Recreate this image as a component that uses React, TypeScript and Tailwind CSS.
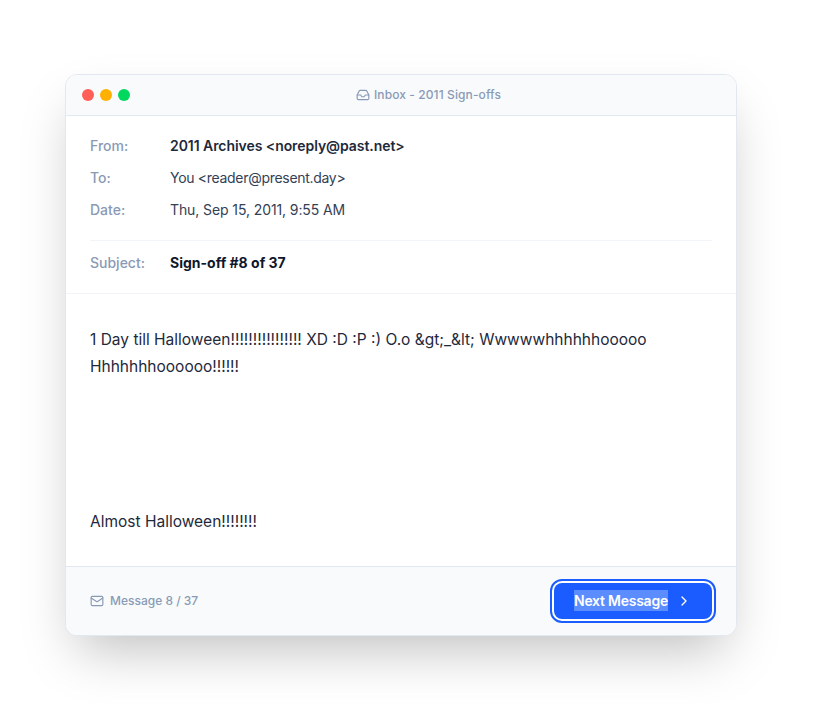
import { Inbox, Mail, ChevronRight } from 'lucide-react';

export default function App() {
  return (
    <div className="min-h-screen bg-white flex justify-start pl-[65px] pt-[74px] font-['Inter',sans-serif]">
      <div className="w-[672px] h-[562px] bg-white rounded-xl border border-[#e2e8f0] overflow-hidden flex flex-col shadow-[0_25px_50px_-12px_rgba(0,0,0,0.25)]">
        <div className="h-[41px] shrink-0 bg-[#f8fafc] border-b border-[#e2e8f0] flex items-center pl-4 pr-4">
          <div className="flex gap-1.5">
            <div className="w-3 h-3 rounded-full bg-[#ff5f57]"></div>
            <div className="w-3 h-3 rounded-full bg-[#ffb000]"></div>
            <div className="w-3 h-3 rounded-full bg-[#00d75f]"></div>
          </div>
          <div className="flex-1 flex items-center justify-center gap-1 pl-[7px] text-xs font-medium tracking-[0.1px] text-[#8a9ab5]">
            <Inbox size={14} />
            Inbox - 2011 Sign-offs
          </div>
        </div>

        <div className="px-6 pt-5 text-sm">
          <div className="flex h-5 items-center mb-3">
            <span className="w-20 font-medium text-[#8a9ab5]">From:</span>
            <span className="font-semibold tracking-[-0.06px] text-[#1e293b]">2011 Archives &lt;noreply@past.net&gt;</span>
          </div>
          <div className="flex h-5 items-center mb-3">
            <span className="w-20 font-medium text-[#8a9ab5]">To:</span>
            <span className="tracking-[-0.3px] text-[#334155]">You &lt;reader@present.day&gt;</span>
          </div>
          <div className="flex h-5 items-center">
            <span className="w-20 font-medium text-[#8a9ab5]">Date:</span>
            <span className="tracking-[-0.1px] text-[#334155]">Thu, Sep 15, 2011, 9:55 AM</span>
          </div>
          <div className="flex h-[53px] items-start pt-3 mt-5 border-t border-[#f1f5f9]">
            <span className="w-20 leading-5 font-medium text-[#8a9ab5]">Subject:</span>
            <span className="leading-5 font-bold text-[#0f172a]">Sign-off #8 of 37</span>
          </div>
        </div>

        <div className="flex-1 border-t border-[#f1f5f9] px-6 pt-8 text-[15.5px] leading-[27px] text-[#1e293b]">
          <p>1 Day till Halloween!!!!!!!!!!!!!!!! XD :D :P :) O.o &amp;gt;_&amp;lt; Wwwwwhhhhhhooooo Hhhhhhhoooooo!!!!!!</p>
          <p className="mt-[128px]">Almost Halloween!!!!!!!!</p>
        </div>

        <div className="h-[69px] shrink-0 bg-[#f8fafc] border-t border-[#e2e8f0] px-6 flex items-center justify-between">
          <div className="flex items-center gap-1.5 text-xs font-medium text-[#8a9ab5]">
            <Mail size={14} />
            Message 8 / 37
          </div>
          <button className="w-[158px] h-9 rounded-lg bg-[#1a5cff] text-white text-sm font-semibold tracking-[-0.25px] flex items-center pl-5 ring-2 ring-white outline-2 outline-offset-2 outline-[#1a5cff]">
            <span className="bg-[#5b8dff] leading-[21px] mb-px">Next Message</span>
            <ChevronRight size={16} className="ml-2" />
          </button>
        </div>
      </div>
    </div>
  );
}
